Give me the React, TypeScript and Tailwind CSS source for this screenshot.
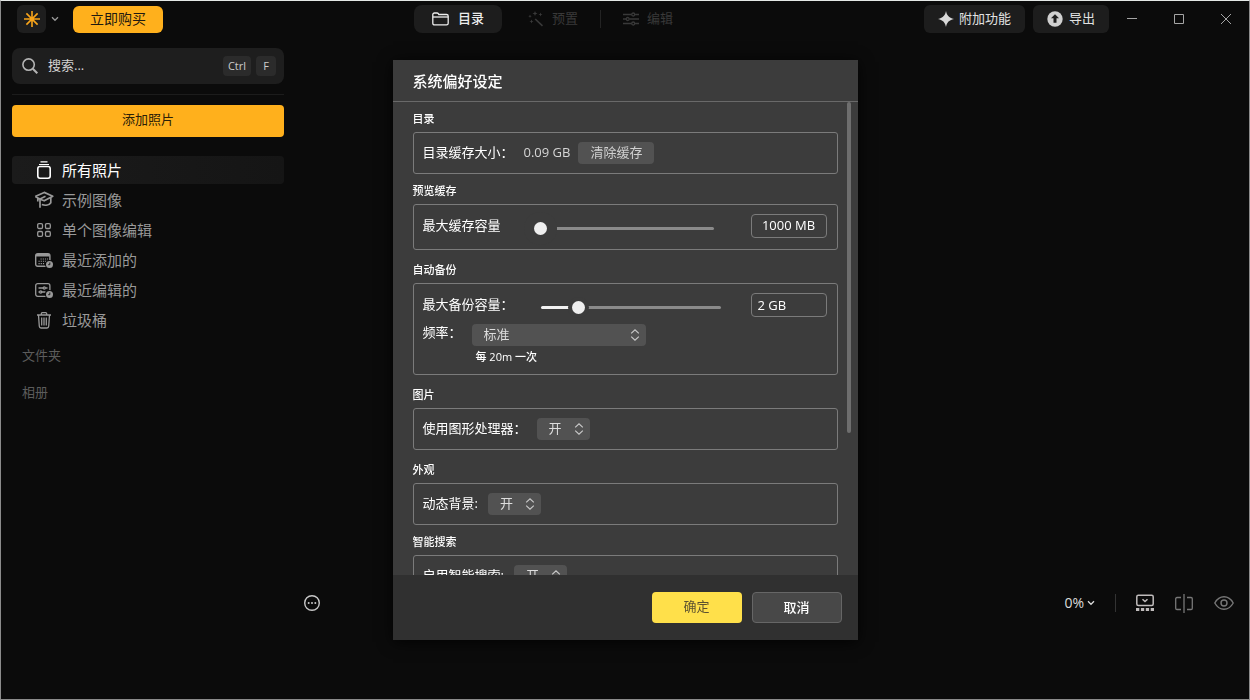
import React, { useState } from 'react';

const Logo = () => (
  <svg viewBox="0 0 16 16" className="h-4 w-4" stroke="#f9a51a" strokeWidth="1.6">
    <path d="M8 0v16M0 8h16M2.4 2.4l11.2 11.2M13.6 2.4L2.4 13.6" />
    <circle cx="8" cy="8" r="2" fill="#f9a51a" stroke="none" />
  </svg>
);

const ChevronDown = () => (
  <svg viewBox="0 0 8 6" className="h-1.5 w-2" fill="none" stroke="currentColor" strokeWidth="1.3">
    <path d="M1 1.3l3 3 3-3" />
  </svg>
);

const UpDown = () => (
  <svg
    viewBox="0 0 10 12"
    className="pointer-events-none absolute right-1.5 top-1/2 h-3 w-2.5 -translate-y-1/2"
    fill="none"
    stroke="#c9c9c9"
    strokeWidth="1.2"
  >
    <path d="M1.2 4.4L5 .9l3.8 3.5M1.2 7.6L5 11.1l3.8-3.5" />
  </svg>
);

const SearchIcon = () => (
  <svg viewBox="0 0 16 16" className="h-4 w-4" fill="none" stroke="#b4b4b4">
    <circle cx="6.6" cy="6.6" r="5.7" strokeWidth="1.6" />
    <path d="M10.8 10.8l4.5 4.5" strokeWidth="2" />
  </svg>
);

const FolderIcon = () => (
  <svg viewBox="0 0 17 14" className="h-3.5 w-[17px]" fill="none" stroke="currentColor" strokeWidth="1.3">
    <path d="M.8 11.2V2.6C.8 1.6 1.500 1 2.400 1h2.600c.6 0 1 .2 1.300.7l.5.8h7.700c1 0 1.700.6 1.700 1.600v7.100c0 1-.7 1.700-1.700 1.700H2.500c-1 0-1.700-.7-1.700-1.700z" />
    <path d="M.8 5h15.400" />
  </svg>
);

const WandIcon = () => (
  <svg viewBox="0 0 16 16" className="h-4 w-4" fill="currentColor">
    <path d="M7.2 8l7.3 6.800" stroke="currentColor" strokeWidth="1.6" />
    <path d="M7 0l.7 1.800 1.800.7-1.800.7L7 5l-.7-1.800-1.800-.7 1.800-.7zM12.500 1.500l.6 1.400 1.400.6-1.400.6-.6 1.400-.6-1.400-1.400-.6 1.400-.6zM2 3.500l.5 1.200 1.200.5-1.200.5L2 6.900l-.5-1.200-1.200-.5 1.200-.5zM3.500 8.500l.6 1.400 1.400.6-1.400.6-.6 1.400-.6-1.400-1.400-.6 1.400-.6z" />
  </svg>
);

const SlidersIcon = () => (
  <svg viewBox="0 0 16 14" className="h-3.5 w-4" fill="none" stroke="currentColor" strokeWidth="1.3">
    <path d="M0 2.500h8.500M12 2.500h4M0 7h3M6.500 7H16M0 11.500h8.500M12 11.500h4" />
    <circle cx="10.200" cy="2.500" r="1.500" />
    <circle cx="4.700" cy="7" r="1.500" />
    <circle cx="10.200" cy="11.500" r="1.500" />
  </svg>
);

const SparkIcon = () => (
  <svg viewBox="0 0 16 16" className="h-4 w-4" fill="#d8d8d8">
    <path d="M8 0c.9 4.400 2.600 6.600 8 8-5.400 1.400-7.100 3.600-8 8-.9-4.400-2.600-6.600-8-8 5.400-1.400 7.100-3.600 8-8z" />
  </svg>
);

const ExportIcon = () => (
  <svg viewBox="0 0 16 16" className="h-4 w-4">
    <circle cx="8" cy="8" r="7.700" fill="#d0d0d0" />
    <path d="M8 3.200l4 4.100H9.500v4.500h-3V7.300H4z" fill="#1d1d1d" />
  </svg>
);

const StackIcon = () => (
  <svg viewBox="0 0 18 18" className="h-[18px] w-[18px]" fill="none" stroke="currentColor">
    <path d="M5.500.8h7M4 3.500h10" strokeWidth="1.200" />
    <rect x="2.800" y="5.500" width="12.400" height="11.700" rx="2.200" strokeWidth="1.600" />
  </svg>
);

const CapIcon = () => (
  <svg viewBox="0 0 20 18" className="h-[18px] w-5" fill="none" stroke="currentColor" strokeWidth="1.700" strokeLinejoin="round">
    <path d="M1.200 5.600l9-4.200 8.600 3.800-8.600 4.600L6 8.200" />
    <path d="M11.500 5.300L6 7.900v8.900M1.500 5.800L6 8M3.800 7v3.500M16.800 6.800v4.900c-1.500 2.200-5.200 3.200-9 1.800" />
  </svg>
);

const GridIcon = () => (
  <svg viewBox="0 0 14 14" className="h-3.5 w-3.5" fill="none" stroke="currentColor" strokeWidth="1.300">
    <rect x=".7" y=".7" width="4.800" height="4.800" rx="1.200" />
    <rect x="8.500" y=".7" width="4.800" height="4.800" rx="1.200" />
    <rect x=".7" y="8.500" width="4.800" height="4.800" rx="1.200" />
    <rect x="8.500" y="8.500" width="4.800" height="4.800" rx="1.200" />
  </svg>
);

const ClockBadge = () => (
  <>
    <circle cx="14.500" cy="11.500" r="4.500" fill="#0b0b0b" stroke="none" />
    <circle cx="14.500" cy="11.500" r="3.500" fill="currentColor" stroke="none" />
    <path d="M14.800 9.500v2.200h-1.600" stroke="#0b0b0b" strokeWidth=".9" />
  </>
);

const CalendarIcon = () => (
  <svg viewBox="0 0 18 15" className="h-[15px] w-[18px]" fill="none" stroke="currentColor" strokeWidth="1.400">
    <rect x=".7" y=".7" width="14.200" height="12.600" rx="2" />
    <path d="M1 2.200h13.600" strokeWidth="2.600" />
    <path d="M5.500 6h7.500M3.500 8.300h9.500M3.500 10.600h6" strokeDasharray="1.200 1" strokeWidth="1.100" />
    <ClockBadge />
  </svg>
);

const EditedIcon = () => (
  <svg viewBox="0 0 18 15" className="h-[15px] w-[18px]" fill="none" stroke="currentColor" strokeWidth="1.300">
    <rect x=".7" y=".7" width="14.200" height="12.600" rx="2" />
    <path d="M3.500 5h4.500M10.500 5h2M3.500 9h1M7 9h3.500" />
    <circle cx="9.300" cy="5" r="1.100" />
    <circle cx="5.700" cy="9" r="1.100" />
    <ClockBadge />
  </svg>
);

const TrashIcon = () => (
  <svg viewBox="0 0 14 17" className="h-[17px] w-3.5" fill="none" stroke="currentColor" strokeWidth="1.300">
    <path d="M0 3h14M4.300 3V1.700c0-.6.4-1 1-1h3.400c.6 0 1 .4 1 1V3M1.500 3l.8 11.300c.1 1 .7 1.700 1.700 1.700h6c1 0 1.600-.7 1.700-1.700L12.500 3M4.700 5.500v8M7 5.500v8M9.300 5.500v8" />
  </svg>
);

const MoreIcon = () => (
  <svg viewBox="0 0 18 18" className="h-[18px] w-[18px]" fill="#c8c8c8">
    <circle cx="9" cy="9" r="7.300" fill="none" stroke="#c8c8c8" strokeWidth="1.400" />
    <circle cx="5.700" cy="9" r="1" />
    <circle cx="9" cy="9" r="1" />
    <circle cx="12.300" cy="9" r="1" />
  </svg>
);

const FilmstripIcon = () => (
  <svg viewBox="0 0 18 18" className="h-[18px] w-[18px]" fill="none" stroke="#c0bcbc" strokeWidth="1.500">
    <rect x=".8" y="1.300" width="16.400" height="10.200" rx="1.500" />
    <path d="M6.500 5.200L9 7.500l2.500-2.300" />
    <path d="M0 15.500h18" strokeWidth="3" strokeDasharray="3.300 1.600" />
  </svg>
);

const CompareIcon = () => (
  <svg viewBox="0 0 18 19" className="h-[19px] w-[18px]" fill="none" stroke="#777" strokeWidth="1.300">
    <path d="M9 0v19M6 3.500H2c-.8 0-1.300.5-1.300 1.300v9.400c0 .8.5 1.300 1.300 1.300h4M12 3.500h4c.8 0 1.300.5 1.300 1.300v9.400c0 .8-.5 1.300-1.300 1.300h-4" />
  </svg>
);

const EyeIcon = () => (
  <svg viewBox="0 0 20 14" className="h-3.5 w-5" fill="none" stroke="#777" strokeWidth="1.400">
    <path d="M.8 7C3 3 6.200.8 10 .8S17 3 19.200 7C17 11 13.800 13.200 10 13.200S3 11 .8 7z" />
    <circle cx="10" cy="7" r="3" />
  </svg>
);

const navItems = [
  { label: '所有照片', icon: <StackIcon />, active: true },
  { label: '示例图像', icon: <CapIcon /> },
  { label: '单个图像编辑', icon: <GridIcon /> },
  { label: '最近添加的', icon: <CalendarIcon /> },
  { label: '最近编辑的', icon: <EditedIcon /> },
  { label: '垃圾桶', icon: <TrashIcon /> },
];

const Header = () => (
  <header className="flex h-9 items-center text-[13px] text-[#e2e2e2]">
    <div className="flex flex-1 items-center">
      <button aria-label="菜单" className="ml-4 flex h-7 w-[29px] items-center justify-center rounded-md bg-[#1e1e1e]">
        <Logo />
      </button>
      <button aria-label="展开菜单" className="ml-1 flex h-7 w-2.5 items-center justify-center text-[#999]">
        <ChevronDown />
      </button>
      <button className="ml-[13px] h-[27px] rounded-md bg-[#ffb01c] px-[17px] text-sm text-[#1f1a10]">立即购买</button>
    </div>
    <nav className="flex w-[422px] items-center">
      <button className="flex h-7 items-center gap-[9px] rounded-lg bg-[#1d1d1d] px-[18px] font-medium text-[#ededed]">
        <FolderIcon />
        目录
      </button>
      <button disabled className="ml-[26px] flex h-7 items-center gap-2 text-[#393939]">
        <WandIcon />
        预置
      </button>
      <div className="mx-[22px] h-[18px] w-px bg-[#232323]" />
      <button disabled className="flex h-7 items-center gap-2 text-[#393939]">
        <SlidersIcon />
        编辑
      </button>
    </nav>
    <div className="flex flex-1 items-center justify-end">
      <button className="flex h-7 items-center gap-[5px] rounded-md bg-[#1d1d1d] px-3.5">
        <SparkIcon />
        附加功能
      </button>
      <button className="ml-2 flex h-7 items-center gap-[6px] rounded-md bg-[#1d1d1d] px-3.5">
        <ExportIcon />
        导出
      </button>
      <div className="flex text-[#a5a5a5]">
        <button aria-label="最小化" className="flex h-7 w-[46px] items-center justify-center">
          <svg viewBox="0 0 12 12" className="h-3 w-3" stroke="currentColor"><path d="M1 5.500h10" /></svg>
        </button>
        <button aria-label="最大化" className="flex h-7 w-12 items-center justify-center">
          <svg viewBox="0 0 12 12" className="h-3 w-3" fill="none" stroke="currentColor"><path d="M1.500 1.500h9v9h-9z" /></svg>
        </button>
        <button aria-label="关闭" className="flex h-7 w-[46px] items-center justify-center">
          <svg viewBox="0 0 12 12" className="h-3 w-3" stroke="currentColor"><path d="M1 1l10 10M11 1L1 11" /></svg>
        </button>
      </div>
    </div>
  </header>
);

const Sidebar = () => (
  <aside className="flex w-[283px] shrink-0 flex-col pl-[11px] pt-[11px]">
    <label className="flex h-9 items-center rounded-lg bg-[#1e1e1e] pl-2.5 pr-2">
      <SearchIcon />
      <input
        type="text"
        aria-label="搜索"
        placeholder="搜索..."
        className="ml-2.5 min-w-0 flex-1 bg-transparent text-[13px] text-[#ddd] outline-none placeholder:text-[#d2d2d2]"
      />
      <kbd className="flex h-5 w-7 items-center justify-center rounded bg-[#2b2b2b] font-[inherit] text-[11px] text-[#ccc]">Ctrl</kbd>
      <kbd className="ml-[5px] flex h-5 w-5 items-center justify-center rounded bg-[#2b2b2b] font-[inherit] text-[11px] text-[#ccc]">F</kbd>
    </label>
    <div className="my-2.5 h-px bg-[#1c1c1c]" />
    <button className="h-8 rounded bg-[#ffb01c] pb-0.5 text-[13px] text-[#2a2008]">添加照片</button>
    <ul className="mt-[19px] flex flex-col gap-0.5 text-[15px]">
      {navItems.map((item) => (
        <li key={item.label}>
          <a
            href="#"
            className={`flex h-7 items-center gap-2 rounded pl-[22px] ${
              item.active ? 'bg-gradient-to-r from-[#1b1b1b] to-[#151515] text-white' : 'text-[#999]'
            }`}
          >
            <span className="flex w-5 justify-center">{item.icon}</span>
            {item.label}
          </a>
        </li>
      ))}
    </ul>
    <h2 className="mt-[11px] pl-2.5 text-[13px] leading-5 text-[#5c5c5c]">文件夹</h2>
    <h2 className="mt-[17px] pl-2.5 text-[13px] leading-5 text-[#5c5c5c]">相册</h2>
  </aside>
);

const Toolbar = () => (
  <div className="flex h-8 items-center justify-between pl-[19px] pr-[15px]">
    <button aria-label="更多"><MoreIcon /></button>
    <div className="flex items-center">
      <button className="flex items-center gap-[3px] text-sm text-[#ddd]">
        0%
        <ChevronDown />
      </button>
      <div className="mx-5 h-[18px] w-px bg-[#333]" />
      <div className="flex items-center gap-[21px]">
        <button aria-label="胶片"><FilmstripIcon /></button>
        <button aria-label="对比"><CompareIcon /></button>
        <button aria-label="预览"><EyeIcon /></button>
      </div>
    </div>
  </div>
);

type SelectProps = { id: string; options: string[]; className: string };

const Select = ({ id, options, className }: SelectProps) => (
  <div className={`relative ${className}`}>
    <select id={id} className="h-[22px] w-full appearance-none rounded bg-[#525252] pb-0.5 pl-3 text-[13px] leading-5 text-[#ddd] outline-none">
      {options.map((o) => (
        <option key={o}>{o}</option>
      ))}
    </select>
    <UpDown />
  </div>
);

type SliderProps = { id: string; initial: number; className: string };

const Slider = ({ id, initial, className }: SliderProps) => {
  const [value, setValue] = useState(initial);
  return (
    <input
      id={id}
      type="range"
      min={0}
      max={100}
      value={value}
      onChange={(e) => setValue(Number(e.target.value))}
      style={{ '--fill': `${value}%` } as React.CSSProperties}
      className={`mt-1 h-[13px] w-[180px] appearance-none bg-transparent [&::-webkit-slider-runnable-track]:h-[3px] [&::-webkit-slider-runnable-track]:rounded-full [&::-webkit-slider-runnable-track]:bg-[linear-gradient(to_right,#f2f2f2_var(--fill),#8a8a8a_var(--fill))] [&::-webkit-slider-thumb]:-mt-[5px] [&::-webkit-slider-thumb]:h-[13px] [&::-webkit-slider-thumb]:w-[13px] [&::-webkit-slider-thumb]:appearance-none [&::-webkit-slider-thumb]:rounded-full [&::-webkit-slider-thumb]:bg-[#efefef] ${className}`}
    />
  );
};

type SectionProps = { title: string; className?: string; children: React.ReactNode };

const Section = ({ title, className = '', children }: SectionProps) => (
  <section className={className}>
    <h3 className="mb-[5px] text-[11px] font-medium leading-4 text-white">{title}</h3>
    <div className="rounded-[3px] border border-[#7b7b7b] py-[9px] pl-[9px] pr-2.5">{children}</div>
  </section>
);

const Preferences = () => (
  <div
    role="dialog"
    aria-labelledby="prefs-title"
    className="flex h-full w-[465px] flex-col bg-[#3c3c3c] text-[13px] text-white shadow-[0_2px_14px_rgba(0,0,0,0.8)]"
  >
    <h2 id="prefs-title" className="flex h-[42px] shrink-0 items-center border-b border-[#696969] px-5 pt-0.5 text-[15px] font-medium">
      系统偏好设定
    </h2>
    <div className="relative min-h-0 flex-1">
      <div className="h-full overflow-y-auto px-5 pb-5 pt-[9px] [scrollbar-width:none]">
        <Section title="目录">
          <div className="flex items-center">
            <span className="mr-2.5">目录缓存大小：</span>
            <span className="text-[#d5d5d5]">0.09 GB</span>
            <button className="ml-2 h-[22px] rounded bg-[#525252] px-3 text-[#d0d0d0]">清除缓存</button>
          </div>
        </Section>

        <Section title="预览缓存" className="mt-[9px]">
          <div className="flex items-center pb-0.5">
            <label htmlFor="cache">最大缓存容量</label>
            <Slider id="cache" initial={0} className="ml-[33px] [&::-webkit-slider-thumb]:shadow-[0_0_0_10px_#3c3c3c]" />
            <input
              aria-label="缓存容量"
              defaultValue="1000 MB"
              className="ml-auto h-6 w-[76px] rounded border border-[#7b7b7b] bg-transparent pb-0.5 text-center outline-none"
            />
          </div>
        </Section>

        <Section title="自动备份" className="mt-3">
          <div className="flex items-center">
            <label htmlFor="backup">最大备份容量：</label>
            <Slider id="backup" initial={19} className="ml-[27px] [&::-webkit-slider-thumb]:shadow-[0_0_0_4px_#3c3c3c]" />
            <input
              aria-label="备份容量"
              defaultValue="2 GB"
              className="ml-auto h-6 w-[76px] rounded border border-[#7b7b7b] bg-transparent px-1.5 outline-none"
            />
          </div>
          <div className="mt-[7px] flex gap-2.5">
            <label htmlFor="frequency" className="leading-4">频率：</label>
            <div>
              <Select id="frequency" options={['标准', '频繁', '较少']} className="w-[174px]" />
              <p className="mt-[3px] pl-1 text-[11px] font-medium leading-4">每 20m 一次</p>
            </div>
          </div>
        </Section>

        <Section title="图片" className="mt-3">
          <div className="flex items-center gap-2.5">
            <label htmlFor="gpu">使用图形处理器：</label>
            <Select id="gpu" options={['开', '关']} className="w-[53px]" />
          </div>
        </Section>

        <Section title="外观" className="mt-3">
          <div className="flex items-center gap-2.5">
            <label htmlFor="dynamic-bg">动态背景:</label>
            <Select id="dynamic-bg" options={['开', '关']} className="w-[53px]" />
          </div>
        </Section>

        <Section title="智能搜索" className="mt-[9px]">
          <div className="flex items-center gap-2.5">
            <label htmlFor="smart-search">启用智能搜索:</label>
            <Select id="smart-search" options={['开', '关']} className="w-[53px]" />
          </div>
        </Section>
      </div>
      {/* Scroll thumb */}
      <div className="absolute right-[7px] top-0 h-[70%] w-1 rounded-full bg-[#6e6e6e]" />
    </div>
    <div className="flex shrink-0 justify-end gap-2.5 bg-[#303030] px-4 py-[17px]">
      <button className="h-[31px] w-[90px] rounded bg-[#ffe04a] pb-0.5 text-[#5c5130]">确定</button>
      <button className="h-[31px] w-[90px] rounded border border-[#666] bg-[#484848] font-medium">取消</button>
    </div>
  </div>
);

const App = () => {
  return (
    <div className="relative flex h-screen flex-col border border-[#8c8c8c] border-t-[#e4e8e6] bg-[#0b0b0b] font-['Open_Sans','Noto_Sans_CJK_SC',sans-serif]">
      <Header />
      <div className="flex min-h-0 flex-1">
        <Sidebar />
        <main className="flex flex-1 flex-col justify-end pb-20">
          <Toolbar />
        </main>
      </div>
      <div className="fixed inset-0 flex justify-center py-15">
        <Preferences />
      </div>
    </div>
  );
};

export default App;
